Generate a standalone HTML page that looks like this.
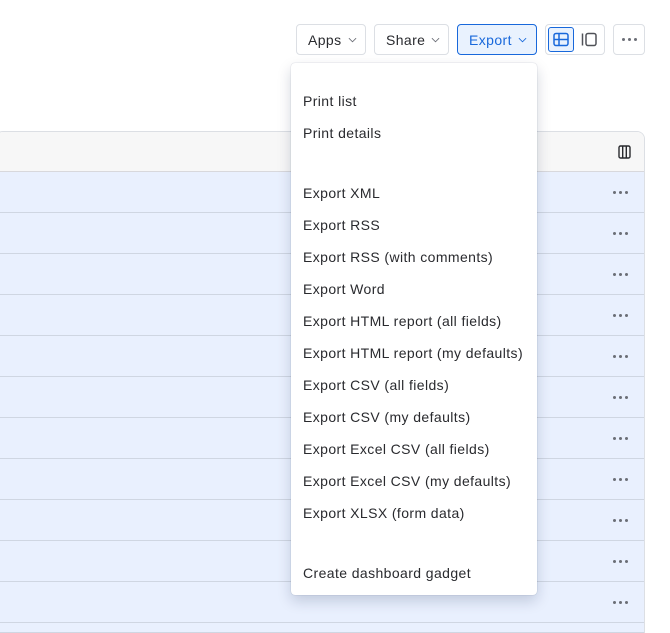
<!DOCTYPE html>
<html><head><style>
*{box-sizing:border-box;margin:0;padding:0}
html,body{width:670px;height:633px;overflow:hidden}
body{background:#fff;font-family:"Liberation Sans",sans-serif;color:#292a2e;position:relative;letter-spacing:0.4px}
.btn{position:absolute;top:24px;height:31px;border:1px solid #dcdfe4;border-radius:4px;font-size:14px;display:flex;align-items:center;padding-left:11px;color:#292a2e}
.btn svg{margin-left:6px}
.tbl{position:absolute;left:-5px;top:131px;width:650px;height:502px;border:1px solid #dcdfe4;border-bottom:none;border-radius:8px 8px 0 0;overflow:hidden}
.hd{height:40px;background:#f7f7f7;border-bottom:1px solid #d8d8dc;position:relative}
.row{height:41px;background:#e9f0fe;border-bottom:1px solid #cfd6e2;position:relative}
.dots{position:absolute;right:16px;top:19px;display:flex;gap:3px}
.dots i{width:3px;height:3px;background:#6b6e76;border-radius:50%;display:block}
.menu{position:absolute;left:291px;top:63px;width:246px;height:532px;background:#fff;border-radius:4px;box-shadow:0 0 1px rgba(9,30,66,.3),0 6px 14px rgba(9,30,66,.18)}
.menu div{position:absolute;left:12px;font-size:14px;color:#292a2e;line-height:16px;white-space:nowrap}
</style></head><body>
<div class="btn" style="left:296px;width:70px">Apps<svg width="9" height="6" viewBox="0 0 10 6"><path d="M1 1l4 4 4-4" fill="none" stroke="#6b6e76" stroke-width="1"/></svg></div>
<div class="btn" style="left:374px;width:75px">Share<svg width="9" height="6" viewBox="0 0 10 6"><path d="M1 1l4 4 4-4" fill="none" stroke="#6b6e76" stroke-width="1"/></svg></div>
<div class="btn" style="left:457px;width:80px;background:#e9f2fe;border-color:#1868db;color:#1868db">Export<svg width="9" height="6" viewBox="0 0 10 6"><path d="M1 1l4 4 4-4" fill="none" stroke="#1868db" stroke-width="1"/></svg></div>
<div class="btn" style="left:545px;width:60px;padding:0">
 <div style="position:absolute;left:2px;top:2px;width:26px;height:25px;border:1px solid #1868db;border-radius:3px;background:#e9f2fe"></div>
 <svg style="position:absolute;left:7px;top:7px;margin:0" width="16" height="15" viewBox="0 0 16 15"><rect x="1" y="1.5" width="14" height="12" rx="2" fill="none" stroke="#1868db" stroke-width="1.5"/><path d="M1 7.5h14M6 1.5v12" stroke="#1868db" stroke-width="1.5"/></svg>
 <svg style="position:absolute;left:35px;top:7px;margin:0" width="16" height="15" viewBox="0 0 16 15"><path d="M1.5 1.5v12" stroke="#505258" stroke-width="1.5"/><rect x="5" y="1.5" width="10" height="12" rx="2" fill="none" stroke="#505258" stroke-width="1.5"/></svg>
</div>
<div class="btn" style="left:613px;width:32px;padding:0;justify-content:center"><div class="dots" style="position:static"><i></i><i></i><i></i></div></div>
<div class="tbl">
 <div class="hd"><svg style="position:absolute;right:13px;top:13px" width="13" height="14" viewBox="0 0 13 14"><rect x="1" y="1" width="11" height="12" rx="1.5" fill="none" stroke="#292a2e" stroke-width="1.4"/><path d="M4.7 1v12M8.3 1v12" stroke="#292a2e" stroke-width="1.4"/></svg></div>
 <div class="row"><div class="dots"><i></i><i></i><i></i></div></div>
 <div class="row"><div class="dots"><i></i><i></i><i></i></div></div>
 <div class="row"><div class="dots"><i></i><i></i><i></i></div></div>
 <div class="row"><div class="dots"><i></i><i></i><i></i></div></div>
 <div class="row"><div class="dots"><i></i><i></i><i></i></div></div>
 <div class="row"><div class="dots"><i></i><i></i><i></i></div></div>
 <div class="row"><div class="dots"><i></i><i></i><i></i></div></div>
 <div class="row"><div class="dots"><i></i><i></i><i></i></div></div>
 <div class="row"><div class="dots"><i></i><i></i><i></i></div></div>
 <div class="row"><div class="dots"><i></i><i></i><i></i></div></div>
 <div class="row"><div class="dots"><i></i><i></i><i></i></div></div>
 <div class="row" style="height:10px"></div>
</div>
<div class="menu">
 <div style="top:30px">Print list</div>
 <div style="top:62px">Print details</div>
 <div style="top:122px">Export XML</div>
 <div style="top:154px">Export RSS</div>
 <div style="top:186px">Export RSS (with comments)</div>
 <div style="top:218px">Export Word</div>
 <div style="top:250px">Export HTML report (all fields)</div>
 <div style="top:282px">Export HTML report (my defaults)</div>
 <div style="top:314px">Export CSV (all fields)</div>
 <div style="top:346px">Export CSV (my defaults)</div>
 <div style="top:378px">Export Excel CSV (all fields)</div>
 <div style="top:410px">Export Excel CSV (my defaults)</div>
 <div style="top:442px">Export XLSX (form data)</div>
 <div style="top:502px">Create dashboard gadget</div>
</div>
</body></html>
